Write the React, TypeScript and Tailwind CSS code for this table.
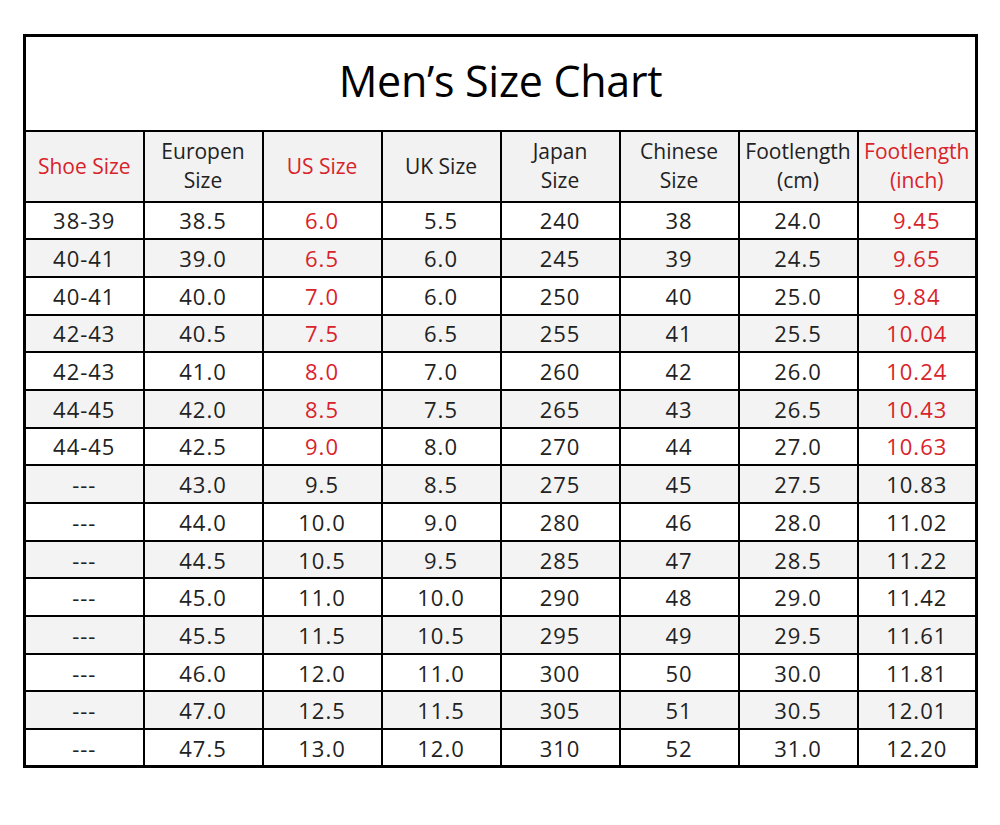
import React from "react";

const RED = "text-[#d8232b]";

type Row = string[];
const rows: Row[] = [
  ["38-39", "38.5", "6.0", "5.5", "240", "38", "24.0", "9.45"],
  ["40-41", "39.0", "6.5", "6.0", "245", "39", "24.5", "9.65"],
  ["40-41", "40.0", "7.0", "6.0", "250", "40", "25.0", "9.84"],
  ["42-43", "40.5", "7.5", "6.5", "255", "41", "25.5", "10.04"],
  ["42-43", "41.0", "8.0", "7.0", "260", "42", "26.0", "10.24"],
  ["44-45", "42.0", "8.5", "7.5", "265", "43", "26.5", "10.43"],
  ["44-45", "42.5", "9.0", "8.0", "270", "44", "27.0", "10.63"],
  ["---", "43.0", "9.5", "8.5", "275", "45", "27.5", "10.83"],
  ["---", "44.0", "10.0", "9.0", "280", "46", "28.0", "11.02"],
  ["---", "44.5", "10.5", "9.5", "285", "47", "28.5", "11.22"],
  ["---", "45.0", "11.0", "10.0", "290", "48", "29.0", "11.42"],
  ["---", "45.5", "11.5", "10.5", "295", "49", "29.5", "11.61"],
  ["---", "46.0", "12.0", "11.0", "300", "50", "30.0", "11.81"],
  ["---", "47.0", "12.5", "11.5", "305", "51", "30.5", "12.01"],
  ["---", "47.5", "13.0", "12.0", "310", "52", "31.0", "12.20"],
];

const headers: { lines: string[]; red: boolean }[] = [
  { lines: ["Shoe Size"], red: true },
  { lines: ["Europen", "Size"], red: false },
  { lines: ["US Size"], red: true },
  { lines: ["UK Size"], red: false },
  { lines: ["Japan", "Size"], red: false },
  { lines: ["Chinese", "Size"], red: false },
  { lines: ["Footlength", "(cm)"], red: false },
  { lines: ["Footlength", "(inch)"], red: true },
];

export default function App() {
  return (
    <div
      className="w-[1000px] h-[825px] bg-white pt-[34px] pl-[23px]"
      style={{ fontFamily: '"Open Sans", "Noto Sans", sans-serif' }}
    >
      <table className="border-collapse table-fixed w-[952px] border-[3px] border-black text-[#222]">
        <colgroup>
          {headers.map((_, i) => (
            <col key={i} className="w-[119px]" />
          ))}
        </colgroup>
        <tbody>
          <tr className="h-[95px]">
            <td
              colSpan={8}
              className="border-2 border-black text-center text-[43px] tracking-[-0.3px] text-black pb-[4px]"
            >
              Men’s Size Chart
            </td>
          </tr>
          <tr className="h-[71px] bg-[#f2f2f2]">
            {headers.map((h, i) => (
              <td
                key={i}
                className={`border-2 border-black text-center text-[21px] leading-[29px] tracking-[0px] px-0 whitespace-nowrap ${
                  h.red ? RED : "text-[#222]"
                }`}
              >
                {h.lines.length === 2 ? (
                  <>
                    {h.lines[0]}
                    <br />
                    {h.lines[1]}
                  </>
                ) : (
                  h.lines[0]
                )}
              </td>
            ))}
          </tr>
          {rows.map((r, ri) => (
            <tr
              key={ri}
              className={`h-[37.7px] ${ri % 2 === 1 ? "bg-[#f3f3f3]" : "bg-white"}`}
            >
              {r.map((c, ci) => {
                const red = (ci === 2 || ci === 7) && ri < 7;
                return (
                  <td
                    key={ci}
                    className={`border-2 border-black text-center text-[22px] leading-[24px] tracking-[1px] p-0 ${
                      red ? RED : "text-[#222]"
                    }`}
                  >
                    {c}
                  </td>
                );
              })}
            </tr>
          ))}
        </tbody>
      </table>
    </div>
  );
}
